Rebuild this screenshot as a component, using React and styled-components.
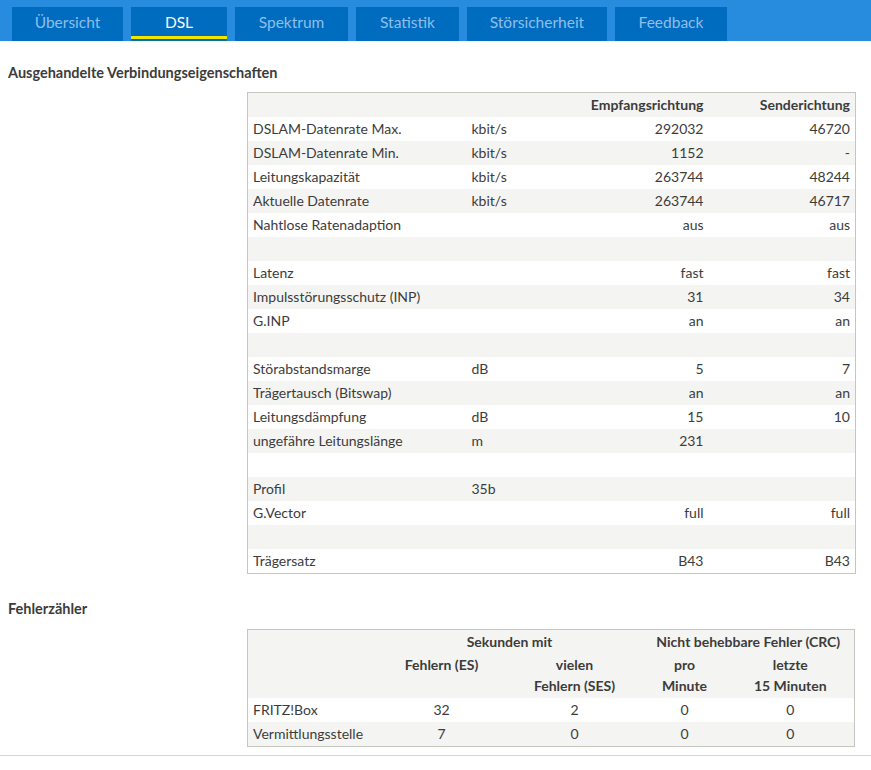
import React from 'react';
import styled, { createGlobalStyle } from 'styled-components';

const GlobalStyle = createGlobalStyle`
  html, body {
    margin: 0;
    padding: 0;
    background: #ffffff;
  }
  body {
    font-family: Lato, "Noto Sans", sans-serif;
    font-size: 14px;
    color: #3c3c3c;
  }
`;

const Page = styled.div`
  width: 871px;
  min-height: 770px;
`;

const TabBar = styled.nav`
  display: flex;
  gap: 8px;
  height: 41px;
  padding: 7px 0 0 12px;
  box-sizing: border-box;
  background: #278bde;
`;

const Tab = styled.div`
  position: relative;
  width: ${({ $w }) => $w}px;
  height: 34px;
  display: flex;
  align-items: center;
  justify-content: center;
  padding-bottom: 4px;
  box-sizing: border-box;
  background: #006cc0;
  color: ${({ $active }) => ($active ? '#ffffff' : '#8ebfe9')};
  font-size: 15.5px;

  &::after {
    content: '';
    display: ${({ $active }) => ($active ? 'block' : 'none')};
    position: absolute;
    left: 0;
    right: 0;
    bottom: 2px;
    height: 3px;
    background: #f2e600;
  }
`;

const Content = styled.main`
  padding: 0 16px 8px 0;
  border-bottom: 1px solid #d6d6d6;
`;

const SectionTitle = styled.h2`
  margin: 0;
  padding: ${({ $top }) => $top}px 0 0 8px;
  height: ${({ $h }) => $h}px;
  box-sizing: border-box;
  font-size: 14.5px;
  font-weight: 700;
  color: #3c3c3c;
  line-height: 20px;
`;

const Table = styled.table`
  margin-left: 247px;
  width: 608px;
  border-collapse: collapse;
  table-layout: fixed;
  border: 1px solid #c6c6c0;

  tr:nth-child(odd) {
    background: #ffffff;
  }
  tr:nth-child(even) {
    background: #f4f4f2;
  }
`;

const Head = styled.thead`
  tr {
    background: #f4f4f2 !important;
  }
`;

const Cell = styled.td`
  height: 24px;
  padding: 0 5px;
  line-height: 24px;
  white-space: nowrap;
  text-align: ${({ $align }) => $align || 'left'};
  vertical-align: ${({ $valign }) => $valign || 'middle'};
  font-weight: ${({ $bold }) => ($bold ? 700 : 400)};
`;

const TwoLine = styled(Cell)`
  height: 43px;
  padding-top: 0;
  padding-bottom: 1px;
  line-height: 21px;
  white-space: normal;
`;

const props = [
  ['DSLAM-Datenrate Max.', 'kbit/s', '292032', '46720'],
  ['DSLAM-Datenrate Min.', 'kbit/s', '1152', '-'],
  ['Leitungskapazität', 'kbit/s', '263744', '48244'],
  ['Aktuelle Datenrate', 'kbit/s', '263744', '46717'],
  ['Nahtlose Ratenadaption', '', 'aus', 'aus'],
  null,
  ['Latenz', '', 'fast', 'fast'],
  ['Impulsstörungsschutz (INP)', '', '31', '34'],
  ['G.INP', '', 'an', 'an'],
  null,
  ['Störabstandsmarge', 'dB', '5', '7'],
  ['Trägertausch (Bitswap)', '', 'an', 'an'],
  ['Leitungsdämpfung', 'dB', '15', '10'],
  ['ungefähre Leitungslänge', 'm', '231', ''],
  null,
  ['Profil', '35b', '', ''],
  ['G.Vector', '', 'full', 'full'],
  null,
  ['Trägersatz', '', 'B43', 'B43'],
];

const errors = [
  ['FRITZ!Box', '32', '2', '0', '0'],
  ['Vermittlungsstelle', '7', '0', '0', '0'],
];

const tabs = [
  ['Übersicht', 111],
  ['DSL', 96],
  ['Spektrum', 113],
  ['Statistik', 103],
  ['Störsicherheit', 140],
  ['Feedback', 112],
];

export default function App() {
  return (
    <Page>
      <GlobalStyle />
      <TabBar>
        {tabs.map(([label, w]) => (
          <Tab key={label} $w={w} $active={label === 'DSL'}>
            {label}
          </Tab>
        ))}
      </TabBar>
      <Content>
        <SectionTitle $top={22} $h={51}>Ausgehandelte Verbindungseigenschaften</SectionTitle>
        <Table>
          <colgroup>
            <col style={{ width: 219 }} />
            <col style={{ width: 100 }} />
            <col style={{ width: 142 }} />
            <col style={{ width: 147 }} />
          </colgroup>
          <Head>
            <tr>
              <Cell />
              <Cell />
              <Cell $align="right" $bold>Empfangsrichtung</Cell>
              <Cell $align="right" $bold>Senderichtung</Cell>
            </tr>
          </Head>
          <tbody>
            {props.map((row, i) =>
              row ? (
                <tr key={i}>
                  <Cell>{row[0]}</Cell>
                  <Cell>{row[1]}</Cell>
                  <Cell $align="right">{row[2]}</Cell>
                  <Cell $align="right">{row[3]}</Cell>
                </tr>
              ) : (
                <tr key={i}>
                  <Cell colSpan={4} />
                </tr>
              )
            )}
          </tbody>
        </Table>

        <SectionTitle $top={25} $h={55}>Fehlerzähler</SectionTitle>
        <Table>
          <colgroup>
            <col style={{ width: 129 }} />
            <col style={{ width: 130 }} />
            <col style={{ width: 136 }} />
            <col style={{ width: 84 }} />
            <col style={{ width: 128 }} />
          </colgroup>
          <Head>
            <tr>
              <Cell />
              <Cell colSpan={2} $align="center" $bold>Sekunden mit</Cell>
              <Cell colSpan={2} $align="center" $bold>Nicht behebbare Fehler (CRC)</Cell>
            </tr>
            <tr>
              <TwoLine />
              <TwoLine $align="center" $valign="top" $bold>Fehlern (ES)</TwoLine>
              <TwoLine $align="center" $valign="top" $bold>vielen<br />Fehlern (SES)</TwoLine>
              <TwoLine $align="center" $valign="top" $bold>pro<br />Minute</TwoLine>
              <TwoLine $align="center" $valign="top" $bold>letzte<br />15 Minuten</TwoLine>
            </tr>
          </Head>
          <tbody>
            {errors.map((row) => (
              <tr key={row[0]}>
                <Cell>{row[0]}</Cell>
                {row.slice(1).map((v, j) => (
                  <Cell key={j} $align="center">{v}</Cell>
                ))}
              </tr>
            ))}
          </tbody>
        </Table>
      </Content>
    </Page>
  );
}
